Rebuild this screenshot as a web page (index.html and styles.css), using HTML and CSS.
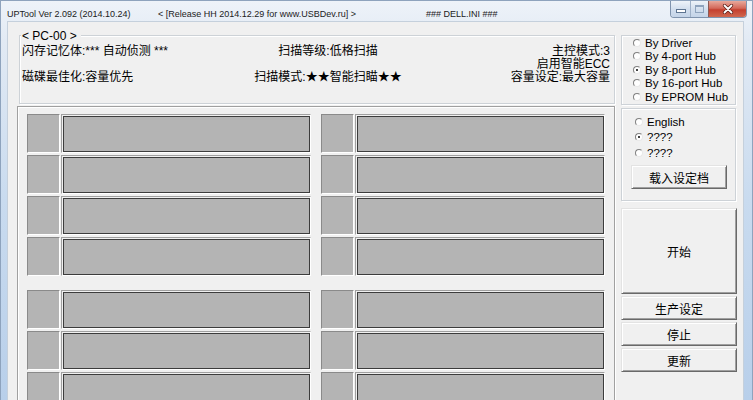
FILE: index.html
```html
<!DOCTYPE html>
<html>
<head>
<meta charset="utf-8">
<link rel="stylesheet" href="styles.css">
</head>
<body>
<div class="window">
  <div class="titlebar">
    <span class="ttl t1">UPTool Ver 2.092 (2014.10.24)</span>
    <span class="ttl t2">&lt; [Release HH 2014.12.29 for www.USBDev.ru] &gt;</span>
    <span class="ttl t3">### DELL.INI ###</span>
    <div class="controls">
      <div class="cb cmin"><span class="minbar"></span></div>
      <div class="cb cmax"><span class="maxbox"></span></div>
      <div class="cb cclose">
        <svg width="12" height="10" viewBox="0 0 12 10"><path d="M2.5 1.5 L9.5 8.5 M9.5 1.5 L2.5 8.5" stroke="#5a1d17" stroke-width="3.2" stroke-linecap="round"/><path d="M2.5 1.5 L9.5 8.5 M9.5 1.5 L2.5 8.5" stroke="#fff" stroke-width="1.8" stroke-linecap="round"/></svg>
      </div>
    </div>
  </div>
  <div class="client">
    <div class="leftcol">
      <div class="group info">
        <span class="caption">&lt; PC-00 &gt;</span>
        <div class="c1">闪存记忆体:*** 自动侦测 ***</div>
        <div class="c2">扫描等级:低格扫描</div>
        <div class="c3">主控模式:3</div>
        <div class="c1"></div>
        <div class="c2"></div>
        <div class="c3">启用智能ECC</div>
        <div class="c1">磁碟最佳化:容量优先</div>
        <div class="c2">扫描模式:★★智能扫瞄★★</div>
        <div class="c3">容量设定:最大容量</div>
      </div>
      <div class="panel">
        <div class="bank">
          <div class="slot"><div class="led"></div><div class="bar"><div class="fill"></div></div></div>
          <div class="slot"><div class="led"></div><div class="bar"><div class="fill"></div></div></div>
          <div class="slot"><div class="led"></div><div class="bar"><div class="fill"></div></div></div>
          <div class="slot"><div class="led"></div><div class="bar"><div class="fill"></div></div></div>
          <div class="slot"><div class="led"></div><div class="bar"><div class="fill"></div></div></div>
          <div class="slot"><div class="led"></div><div class="bar"><div class="fill"></div></div></div>
          <div class="slot"><div class="led"></div><div class="bar"><div class="fill"></div></div></div>
          <div class="slot"><div class="led"></div><div class="bar"><div class="fill"></div></div></div>
        </div>
        <div class="bank">
          <div class="slot"><div class="led"></div><div class="bar"><div class="fill"></div></div></div>
          <div class="slot"><div class="led"></div><div class="bar"><div class="fill"></div></div></div>
          <div class="slot"><div class="led"></div><div class="bar"><div class="fill"></div></div></div>
          <div class="slot"><div class="led"></div><div class="bar"><div class="fill"></div></div></div>
          <div class="slot"><div class="led"></div><div class="bar"><div class="fill"></div></div></div>
          <div class="slot"><div class="led"></div><div class="bar"><div class="fill"></div></div></div>
        </div>
      </div>
    </div>
    <div class="rightcol">
      <div class="group radios">
        <div class="radio"><span class="dot"></span>By Driver</div>
        <div class="radio"><span class="dot"></span>By 4-port Hub</div>
        <div class="radio"><span class="dot on"></span>By 8-port Hub</div>
        <div class="radio"><span class="dot"></span>By 16-port Hub</div>
        <div class="radio"><span class="dot"></span>By EPROM Hub</div>
      </div>
      <div class="group lang">
        <div class="radio lr"><span class="dot"></span>English</div>
        <div class="radio lr lr2"><span class="dot on"></span>????</div>
        <div class="radio lr lr2"><span class="dot"></span>????</div>
        <div class="btn load">载入设定档</div>
      </div>
      <div class="btn start">开始</div>
      <div class="btn small">生产设定</div>
      <div class="btn small">停止</div>
      <div class="btn small">更新</div>
    </div>
  </div>
</div>
</body>
</html>
```

FILE: styles.css
```css
html, body {
  margin: 0;
  padding: 0;
  width: 753px;
  height: 400px;
  overflow: hidden;
  background: #f0f0f0;
}

.window {
  width: 753px;
  height: 400px;
  box-sizing: border-box;
  overflow: hidden;
  background: linear-gradient(to bottom, #eef3f9 0px, #e2eaf4 40px, #c9dbef 200px, #b8cfea 400px);
  box-shadow: inset 1px 0 0 #8ea3bd, inset -1px 0 0 #8ea3bd, inset 0 1px 0 #8ea3bd;
  display: flex;
  flex-direction: column;
  font-family: "Liberation Sans", "Noto Sans CJK SC", sans-serif;
  color: #000;
}

.titlebar {
  height: 21px;
  display: flex;
  align-items: flex-start;
  padding-left: 7px;
  flex-shrink: 0;
}

.ttl {
  font-family: "Liberation Sans", sans-serif;
  font-size: 9px;
  line-height: 12px;
  margin-top: 8px;
  color: #1b1b1b;
  white-space: nowrap;
}

.t1 { width: 151px; }
.t2 { width: 268px; }

.controls {
  margin-left: auto;
  margin-right: 6px;
  margin-top: 1px;
  display: flex;
  height: 17px;
  border: 1px solid #7f93ad;
  border-top: none;
  border-radius: 0 0 4px 4px;
  overflow: hidden;
  box-sizing: border-box;
}

.cb {
  height: 100%;
  display: flex;
  align-items: center;
  justify-content: center;
  box-sizing: border-box;
}

.cmin {
  width: 20px;
  background: linear-gradient(to bottom, #eef3f9, #d3dfee 50%, #c4d4e8);
  border-right: 1px solid #9fb1c8;
}

.cmax {
  width: 18px;
  background: linear-gradient(to bottom, #eef3f9, #d3dfee 50%, #c4d4e8);
  border-right: 1px solid #8a5a55;
}

.cclose {
  width: 37px;
  background: linear-gradient(to bottom, #e8a99c, #d4695a 45%, #c4402f 55%, #d0674f);
}

.minbar {
  width: 8px;
  height: 2px;
  background: #fff;
  border: 1px solid #5e7592;
  margin-top: 4px;
}

.maxbox {
  width: 7px;
  height: 5px;
  border: 1px solid #8ea3bd;
  border-top-width: 2px;
  background: transparent;
}

.client {
  flex: 1;
  min-height: 0;
  overflow: hidden;
  margin: 0 9px 0 7px;
  border: 1px solid #c5d0dc;
  border-bottom: none;
  background: #f0f0f0;
  display: grid;
  grid-template-columns: 598px 116px;
  column-gap: 6px;
  align-content: start;
  padding: 13px 5px 0 9px;
  font-size: 12px;
}

.leftcol,
.rightcol {
  display: flex;
  flex-direction: column;
}

.group {
  position: relative;
  box-sizing: border-box;
  border: 1px solid #cdd2d7;
  box-shadow: 1px 1px 0 #fff, inset 1px 1px 0 #fff;
}

.caption {
  position: absolute;
  top: -7px;
  left: 1px;
  padding: 0 4px 0 1px;
  background: #f0f0f0;
  font-size: 12px;
  line-height: 14px;
  white-space: nowrap;
}

.info {
  margin-left: 2px;
  width: 596px;
  height: 69px;
  padding: 9px 4px 0 2px;
  display: grid;
  grid-template-columns: 212px 188px 1fr;
  grid-auto-rows: 13px;
  line-height: 13px;
  font-size: 12px;
  white-space: nowrap;
}

.c2 { text-align: center; }
.c3 { text-align: right; }

.panel {
  margin-top: 2px;
  height: 300px;
  flex-shrink: 0;
  box-sizing: border-box;
  border: 1px solid #a0a0a0;
  border-bottom: none;
  box-shadow: 1px 0 0 #fff, inset 1px 1px 0 #fff;
  padding: 7px 0 0 9px;
}

.bank {
  display: grid;
  grid-template-columns: 284px 284px;
  column-gap: 10px;
  row-gap: 2px;
  margin-bottom: 14px;
}

.slot {
  display: flex;
  height: 39px;
}

.led {
  width: 33px;
  height: 39px;
  box-sizing: border-box;
  background: #b4b4b4;
  border: 1px solid;
  border-color: #8a8a8a #fff #fff #8a8a8a;
}

.bar {
  margin-left: 1px;
  width: 250px;
  height: 39px;
  box-sizing: border-box;
  border: 1px solid;
  border-color: #a0a0a0 #fff #fff #a0a0a0;
  padding: 1px 0 0 1px;
}

.fill {
  height: 100%;
  box-sizing: border-box;
  border: 1px solid #3c3c3c;
  background: #b4b4b4;
}

.radios {
  width: 115px;
  height: 70px;
  padding: 0 0 0 11px;
}

.radio {
  display: flex;
  align-items: center;
  height: 13.5px;
  font-family: "Liberation Sans", sans-serif;
  font-size: 11.5px;
  white-space: nowrap;
}

.dot {
  width: 8px;
  height: 8px;
  box-sizing: border-box;
  border-radius: 50%;
  border: 1px solid;
  border-color: #808080 #e8e8e8 #e8e8e8 #808080;
  background: #fff;
  margin-right: 4px;
  display: flex;
  align-items: center;
  justify-content: center;
  flex-shrink: 0;
}

.dot.on::after {
  content: "";
  width: 2px;
  height: 2px;
  border-radius: 50%;
  background: #000;
}

.lang {
  margin-top: 3px;
  width: 115px;
  height: 93px;
  padding: 5px 0 0 9px;
}

.lr {
  height: 15px;
  padding-left: 4px;
}

.lr2 {
  height: 16px;
}

.btn {
  box-sizing: border-box;
  display: flex;
  align-items: center;
  justify-content: center;
  background: #f0f0f0;
  border: 1px solid;
  border-color: #e3e3e3 #696969 #696969 #e3e3e3;
  box-shadow: inset 1px 1px 0 #fff, inset -1px -1px 0 #a0a0a0;
  font-size: 12px;
  font-family: "Liberation Sans", "Noto Sans CJK SC", sans-serif;
}

.load {
  margin-top: 4px;
  width: 96px;
  height: 24px;
}

.start {
  margin-top: 7px;
  width: 116px;
  height: 86px;
}

.small {
  margin-top: 2px;
  width: 116px;
  height: 24px;
}
```
